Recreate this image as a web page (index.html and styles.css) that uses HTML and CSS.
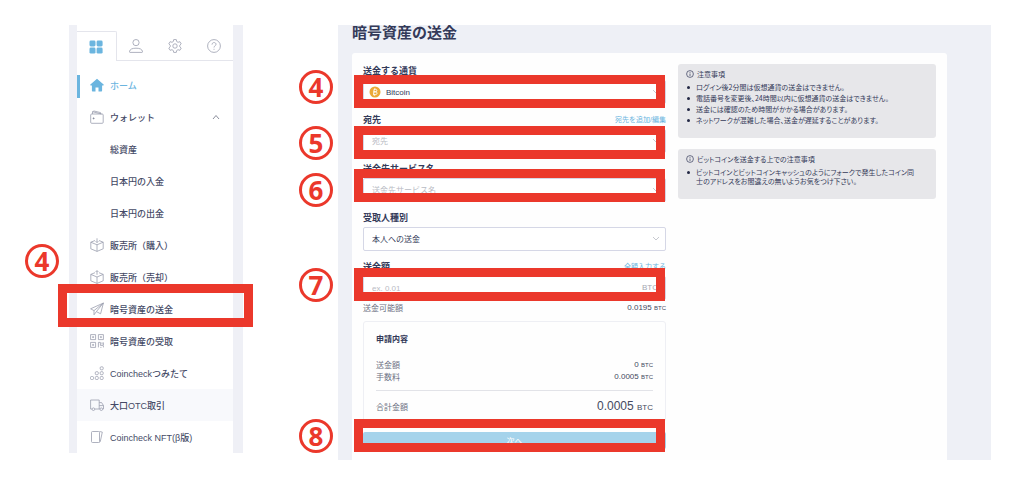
FILE: index.html
```html
<!DOCTYPE html>
<html lang="ja">
<head>
  <meta charset="UTF-8">
  <meta name="viewport" content="width=device-width, initial-scale=1.0">
  <title>暗号資産の送金</title>
  <link rel="stylesheet" href="styles.css">
</head>
<body>
  <div class="page">
    <aside class="sidebar">
      <div class="sidebar-inner">
        <div class="tabs">
          <button class="tab active" type="button" aria-label="メニュー">
            <svg width="14" height="14" viewBox="0 0 14 14" fill="#6bb5df"><rect x="0.5" y="0.5" width="6" height="6" rx="1.4"/><rect x="7.6" y="0.5" width="6" height="6" rx="1.4"/><rect x="0.5" y="7.6" width="6" height="6" rx="1.4"/><rect x="7.6" y="7.6" width="6" height="6" rx="1.4"/></svg>
          </button>
          <button class="tab" type="button" aria-label="アカウント">
            <svg class="line" width="14" height="14" viewBox="0 0 14 14"><circle cx="7" cy="3.6" r="3.1"/><path d="M1 13.4c-.6 0-.7-.5-.5-1C1 10.300 3 9.200 7 9.200s6 1.100 6.500 3.200c.2.500.1 1-.5 1z"/></svg>
          </button>
          <button class="tab" type="button" aria-label="設定">
            <svg class="line" width="14" height="14" viewBox="0 0 14 14"><circle cx="7" cy="7" r="2.200"/><path d="M5.700.6h2.600l.4 1.900 1.300.8 1.900-.6 1.300 2.200-1.400 1.300v1.600l1.400 1.300-1.300 2.200-1.900-.6-1.300.8-.4 1.900H5.700l-.4-1.900-1.300-.8-1.900.6L.8 9.100l1.400-1.300V6.200L.8 4.900l1.300-2.200 1.900.6 1.300-.8z" stroke-linejoin="round"/></svg>
          </button>
          <button class="tab" type="button" aria-label="ヘルプ">
            <svg class="line" width="14" height="14" viewBox="0 0 14 14"><circle cx="7" cy="7" r="6.400"/><path d="M5 5.600c0-2.700 4-2.700 4-.3 0 1.500-2 1.500-2 3.200M7 9.800v1"/></svg>
          </button>
        </div>

        <ul class="nav">
          <li class="current"><a href="#">
            <svg width="14" height="14" viewBox="0 0 14 14" fill="#6bb5df"><path d="M7 .8 .4 6.500c-.4.400-.2.900.3.900h1.200v5c0 .6.400 1 1 1h2.600V9.500h3v3.900h2.600c.6 0 1-.4 1-1v-5h1.200c.5 0 .7-.5.300-.9z"/></svg>
            ホーム</a></li>
          <li><a href="#">
            <svg class="line" width="14" height="14" viewBox="0 0 14 14"><rect x=".7" y="4" width="12.500" height="9.300" rx="1"/><path d="M2.500 4V1.700L11.500 4M2.500 1.700 4 1l6.500 1.600V4"/><circle cx="3.600" cy="8.400" r=".6" fill="#555b75"/></svg>
            ウォレット
            <svg class="line caret" width="8" height="6" viewBox="0 0 8 6"><path d="M1 5l3-3.500L7 5"/></svg></a></li>
          <li class="sub"><a href="#">総資産</a></li>
          <li class="sub"><a href="#">日本円の入金</a></li>
          <li class="sub"><a href="#">日本円の出金</a></li>
          <li><a href="#">
            <svg class="line" width="14" height="14" viewBox="0 0 14 14"><path d="M5 2.500.8 4.200v6.600L7 13.400l6.200-2.600V4.200L9 2.500M.8 4.200 7 6.800l6.200-2.600M7 6.800v6.600M7 .3v4.200M5.600 3.200 7 4.600l1.400-1.400"/></svg>
            販売所（購入）</a></li>
          <li><a href="#">
            <svg class="line" width="14" height="14" viewBox="0 0 14 14"><path d="M5 2.700.8 4.400v6.400L7 13.400l6.200-2.600V4.400L9 2.700M.8 4.400 7 7l6.200-2.600M7 7v6.400M7 .8v4M5.600 2 7 .6 8.400 2"/></svg>
            販売所（売却）</a></li>
          <li class="marked"><a href="#">
            <svg class="line" width="14" height="14" viewBox="0 0 14 14"><path d="M13.400 1 .6 6.800l3.400 1.800L13.400 1 10.600 11.800 6.400 9.600 13.400 1M4 8.600v4.200l2.400-3.200"/></svg>
            暗号資産の送金</a>
            <span class="num">4</span>
            <span class="mark"></span>
          </li>
          <li><a href="#">
            <svg class="line" width="14" height="14" viewBox="0 0 14 14"><path d="M.6.600h5v5h-5zM8.400.600h5v5h-5zM.6 8.400h5v5h-5zM2.600 2.600h1v1h-1zM10.400 2.600h1v1h-1zM2.600 10.400h1v1h-1zM8.400 13.400V8.400h2v3h3v-3M10.400 13.400h1M13.400 12v1.400M12 8.400v2"/></svg>
            暗号資産の受取</a></li>
          <li><a href="#">
            <svg class="line" width="14" height="14" viewBox="0 0 14 14"><rect x=".5" y="10.500" width="3" height="3" rx="1"/><rect x="5.300" y="10.500" width="3" height="3" rx="1"/><rect x="10.200" y="10.500" width="3" height="3" rx="1"/><rect x="5.300" y="5.700" width="3" height="3" rx="1"/><rect x="10.200" y="5.700" width="3" height="3" rx="1"/><rect x="10.200" y=".8" width="3" height="3" rx="1"/></svg>
            Coincheckつみたて</a></li>
          <li class="shade"><a href="#">
            <svg class="line" width="14" height="14" viewBox="0 0 14 14"><path d="M2 11H.6V2h8.600v9H4.800M9.200 4.600h2.400l1.900 3V11h-.8M9.200 11h.7M9.200 7.600h4.300"/><circle cx="3.400" cy="11.200" r="1.300"/><circle cx="11.300" cy="11.200" r="1.300"/></svg>
            大口OTC取引</a></li>
          <li><a href="#">
            <svg class="line" width="14" height="14" viewBox="0 0 14 14"><rect x="1.500" y="1.500" width="8" height="11" rx="1"/><path d="M9.500 1.500l2.800.6-2 9.400-.8 1"/></svg>
            Coincheck NFT(β版)</a></li>
        </ul>
      </div>
    </aside>

    <main class="main">
      <h1>暗号資産の送金</h1>
      <div class="card">
        <form class="form">
          <div class="group">
            <div class="label-row"><label for="currency">送金する通貨</label></div>
            <div class="field">
              <svg class="coin" width="12" height="12" viewBox="0 0 12 12"><circle cx="6" cy="6" r="5.500" fill="#eba937"/><path d="M5 3.300h1.600c1.700 0 1.600 2.500 0 2.500H4.800h1.900c1.900 0 1.700 2.900-.3 2.900H4.300M5.100 3.300 4.600 8.700M5.800 2.400v.9M5.400 8.700v.9" fill="none" stroke="#fff"/></svg>
              <select id="currency" class="with-coin"><option>Bitcoin</option></select>
              <svg class="line arrow" width="8" height="6" viewBox="0 0 8 6"><path d="M1 1l3 3 3-3"/></svg>
            </div>
          </div>
          <div class="group">
            <div class="label-row"><label for="address">宛先</label><a href="#">宛先を追加/編集</a></div>
            <div class="field">
              <select id="address" class="empty"><option>宛先</option></select>
              <svg class="line arrow" width="8" height="6" viewBox="0 0 8 6"><path d="M1 1l3 3 3-3"/></svg>
            </div>
          </div>
          <div class="group">
            <div class="label-row"><label for="service">送金先サービス名</label></div>
            <div class="field">
              <select id="service" class="empty"><option>送金先サービス名</option></select>
              <svg class="line arrow" width="8" height="6" viewBox="0 0 8 6"><path d="M1 1l3 3 3-3"/></svg>
            </div>
          </div>
          <div class="group">
            <div class="label-row"><label for="receiver">受取人種別</label></div>
            <div class="field">
              <select id="receiver"><option>本人への送金</option></select>
              <svg class="line arrow" width="8" height="6" viewBox="0 0 8 6"><path d="M1 1l3 3 3-3"/></svg>
            </div>
          </div>
          <div class="group amount">
            <div class="label-row"><label for="amount">送金額</label><a href="#">全額入力する</a></div>
            <div class="field">
              <input type="text" id="amount" placeholder="ex. 0.01">
              <span class="suffix">BTC</span>
            </div>
          </div>
          <div class="row available"><span>送金可能額</span><b>0.0195 <small>BTC</small></b></div>

          <div class="summary">
            <h2>申請内容</h2>
            <div class="row"><span>送金額</span><b>0 <small>BTC</small></b></div>
            <div class="row"><span>手数料</span><b>0.0005 <small>BTC</small></b></div>
            <div class="row total"><span>合計金額</span><b>0.0005 <small>BTC</small></b></div>
          </div>
          <button class="btn" type="button">次へ</button>

          <!-- 手順の番号と赤枠 -->
          <div class="step step-currency"><span class="num">4</span><span class="mark"></span></div>
          <div class="step step-address"><span class="num">5</span><span class="mark"></span></div>
          <div class="step step-service"><span class="num">6</span><span class="mark"></span></div>
          <div class="step step-amount"><span class="num">7</span><span class="mark"></span></div>
          <div class="step step-next"><span class="num">8</span><span class="mark"></span></div>
        </form>

        <div class="notes">
          <section class="note">
            <h3><svg width="8" height="8" viewBox="0 0 8 8"><circle cx="4" cy="4" r="3.400"/><path d="M4 3.500V6M4 2v.8"/></svg>注意事項</h3>
            <ul>
              <li>ログイン後2分間は仮想通貨の送金はできません。</li>
              <li>電話番号を変更後、24時間以内に仮想通貨の送金はできません。</li>
              <li>送金には確認のため時間がかかる場合があります。</li>
              <li>ネットワークが混雑した場合、送金が遅延することがあります。</li>
            </ul>
          </section>
          <section class="note">
            <h3><svg width="8" height="8" viewBox="0 0 8 8"><circle cx="4" cy="4" r="3.400"/><path d="M4 3.500V6M4 2v.8"/></svg>ビットコインを送金する上での注意事項</h3>
            <ul>
              <li>ビットコインとビットコインキャッシュのようにフォークで発生したコイン同<br>士のアドレスをお間違えの無いようお気をつけ下さい。</li>
            </ul>
          </section>
        </div>
      </div>
    </main>
  </div>
</body>
</html>
```
FILE: styles.css
```css
* {
  box-sizing: border-box;
}
body {
  margin: 0;
  background: #fff;
  color: #343a59;
  font-family: "Liberation Sans", "Noto Sans CJK JP", sans-serif;
  font-size: 8px;
}
a {
  color: #6bb5df;
  text-decoration: none;
}
ul {
  list-style: none;
  margin: 0;
  padding: 0;
}
button, input, select {
  font-family: inherit;
}
svg {
  flex: none;
}
.line {
  fill: none;
  stroke: #9a9eae;
  stroke-width: 0.8;
}
.page {
  display: flex;
  align-items: flex-start;
  gap: 95px;
  padding: 25px 33px 30px 69px;
}

/* sidebar */
.sidebar {
  flex: none;
  width: 174px;
  padding: 0 10px 0 8px;
  background: #eff0f6;
}
.sidebar-inner {
  background: #fff;
  padding-top: 6px;
}
.tabs {
  display: flex;
}
.tab {
  display: flex;
  flex: 1;
  align-items: center;
  justify-content: center;
  height: 30px;
  padding: 0;
  background: #fff;
  border: 0;
  border-bottom: 1px solid #e4e5ec;
  cursor: pointer;
}
.tab.active {
  border-top: 1px solid #e4e5ec;
  border-right: 1px solid #e4e5ec;
  border-bottom: 0;
  border-radius: 0 2px 0 0;
}
.nav {
  padding-top: 8px;
}
.nav li {
  position: relative;
}
.nav a {
  display: flex;
  align-items: center;
  gap: 6px;
  height: 32px;
  padding: 0 13px;
  color: #454a66;
  font-size: 9px;
  font-weight: 500;
}
.nav .sub a {
  padding-left: 33px;
}
.nav .current a {
  color: #6bb5df;
}
.nav .current::before {
  content: "";
  position: absolute;
  top: 6px;
  left: 0;
  width: 3px;
  height: 23px;
  background: #6bb5df;
}
.nav .shade {
  background: #f8f9fc;
}
.caret {
  margin-left: auto;
  stroke: #6d7183;
}

/* red frames and step numbers */
.mark {
  position: absolute;
  border: 9px solid #eb382b;
  pointer-events: none;
}
.num {
  position: absolute;
  width: 34px;
  height: 34px;
  border: 3px solid #eb382b;
  border-radius: 50%;
  color: #eb382b;
  font-family: "Noto Sans", sans-serif;
  font-size: 26px;
  font-weight: 700;
  line-height: 28px;
  text-align: center;
}
.marked .mark {
  top: -9px;
  left: -19px;
  right: -20px;
  height: 43px;
}
.marked .num {
  top: -49px;
  left: -52px;
}
.step {
  position: absolute;
  left: 0;
  right: 0;
  pointer-events: none;
}
.step .mark {
  top: 0;
  left: -9px;
  right: 1px;
  height: 33px;
}
.step .num {
  left: -64px;
}
.step-currency { top: 12px; }
.step-address { top: 63px; }
.step-service { top: 106px; }
.step-amount { top: 205px; }
.step-next { top: 356px; }
.step-currency .num { top: -5px; }
.step-service .num { top: 4px; }

/* main */
.main {
  flex: 1;
  min-width: 0;
  padding: 0 44px 0 14px;
  background: #eef0f6;
}
h1 {
  margin: 0 0 13px;
  font-size: 15px;
  line-height: 15px;
}
.card {
  display: flex;
  gap: 12px;
  padding: 10px 11px 11px;
  background: #fefefe;
  border-radius: 3px 3px 0 0;
}
.form {
  position: relative;
  flex: 303;
  min-width: 0;
}
.group {
  margin-bottom: 8px;
}
.label-row {
  display: flex;
  justify-content: space-between;
  align-items: center;
  height: 14px;
  margin-bottom: 3px;
}
.label-row label {
  font-size: 9px;
  font-weight: 700;
}
.label-row a {
  font-size: 7px;
}
.field {
  position: relative;
}
.field select,
.field input {
  display: block;
  width: 100%;
  height: 24px;
  padding: 0 8px;
  background: #fff;
  border: 1px solid #d5d7e6;
  border-radius: 2px;
  color: #343a59;
  font-size: 8px;
  appearance: none;
}
.field .empty {
  color: #b9bbc4;
}
.field input::placeholder {
  color: #b9bbc4;
}
.field .with-coin {
  padding-left: 22px;
}
.coin {
  position: absolute;
  top: 6px;
  left: 6px;
}
.arrow {
  position: absolute;
  top: 9px;
  right: 6px;
  stroke: #b9bbc4;
}
.suffix {
  position: absolute;
  top: 0;
  right: 8px;
  color: #a5a8b3;
  line-height: 24px;
}
.amount {
  margin-bottom: 1px;
}
.row {
  display: flex;
  align-items: center;
  justify-content: space-between;
  height: 12px;
  color: #6d7183;
}
.row b {
  color: #444960;
  font-weight: 400;
}
.row small {
  font-size: 6px;
}
.summary {
  margin: 8px 0 10px;
  padding: 12px 12px 0;
  border: 1px solid #eeeff4;
  border-radius: 3px;
}
.summary h2 {
  margin: 0 0 12px;
  font-size: 8px;
  line-height: 12px;
}
.total {
  height: 31px;
  margin-top: 8px;
  border-top: 1px solid #e2e3e8;
}
.total b {
  font-size: 12px;
}
.total small {
  font-size: 8px;
}
.btn {
  display: block;
  width: 100%;
  height: 17px;
  padding: 0;
  background: #a5d3eb;
  border: 0;
  border-radius: 2px;
  color: #fff;
  font-size: 8px;
  cursor: pointer;
}

/* notes */
.notes {
  flex: 258;
  min-width: 0;
  padding-top: 1px;
}
.note {
  margin-bottom: 11px;
  padding: 5px 8px 13px;
  background: #e7e7ea;
  border-radius: 3px;
  font-size: 7px;
  font-family: "Noto Sans CJK JP", sans-serif;
  font-feature-settings: "palt";
}
.note h3 {
  display: flex;
  align-items: center;
  gap: 3px;
  margin: 0 0 4px;
  font-size: 7px;
  font-weight: 400;
  line-height: 10px;
}
.note h3 svg {
  fill: none;
  stroke: #343a59;
  stroke-width: 0.7;
}
.note li {
  position: relative;
  margin-bottom: 2px;
  padding-left: 10px;
  line-height: 9px;
  white-space: nowrap;
}
.note li:last-child {
  margin-bottom: 0;
}
.note li::before {
  content: "";
  position: absolute;
  top: 3px;
  left: 1px;
  width: 3px;
  height: 3px;
  background: #232845;
  border-radius: 50%;
}
```
